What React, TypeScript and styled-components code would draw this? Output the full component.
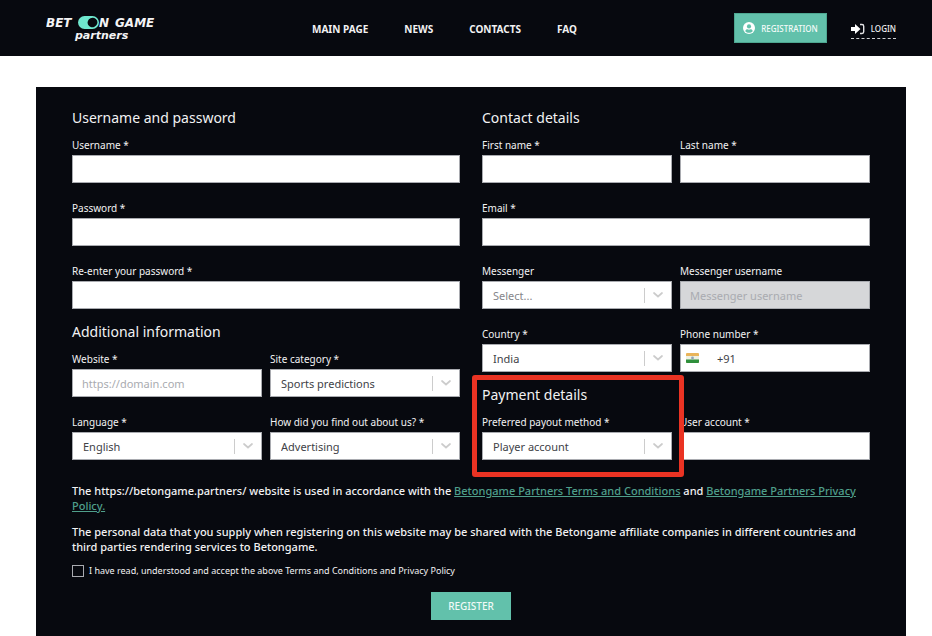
import React, { useId, useState } from 'react';
import styled, { createGlobalStyle } from 'styled-components';

const GlobalStyle = createGlobalStyle`
  *, *::before, *::after { box-sizing: border-box; }
  body {
    margin: 0;
    background: #fff;
    color: #f2f2f3;
    font-family: "Noto Sans", "Open Sans", sans-serif;
    font-size: 11px;
  }
  button, input, select { font: inherit; color: inherit; }
`;

const Header = styled.header`
  display: flex;
  align-items: center;
  height: 56px;
  padding: 0 36px 0 46px;
  background: #07090f;
`;

const LogoLink = styled.a`
  display: flex;
  flex: none;
`;

const Nav = styled.nav`
  display: flex;
  gap: 36px;
  margin-left: 154px;
  padding-top: 2px;
`;

const NavLink = styled.a`
  color: #f2f2f3;
  font-size: 10px;
  font-weight: 700;
  line-height: 16px;
  text-decoration: none;
  white-space: nowrap;
`;

const Actions = styled.div`
  display: flex;
  align-items: center;
  gap: 24px;
  margin-left: auto;
`;

const RegistrationButton = styled.button`
  display: flex;
  align-items: center;
  gap: 6px;
  height: 30px;
  padding: 0 8px;
  border: 1px solid #4ea791;
  background: #62c1ab;
  color: #f4fbf9;
  font-size: 8px;
  font-weight: 500;
  white-space: nowrap;
`;

const LoginLink = styled.a`
  display: flex;
  align-items: center;
  gap: 6px;
  height: 20px;
  margin-top: 2px;
  border-bottom: 1px dashed #d0d1d3;
  color: #f2f2f3;
  font-size: 8px;
  font-weight: 500;
  text-decoration: none;
`;

const Panel = styled.main`
  margin: 31px 26px 0 36px;
  padding: 21px 36px 16px;
  background: #07090f;
`;

const Columns = styled.div`
  display: grid;
  grid-template-columns: 1fr 1fr;
  gap: 22px;
`;

const Column = styled.div`
  display: flex;
  flex-direction: column;
  gap: 13px;
`;

const Section = styled.section`
  position: relative;
`;

const Heading = styled.h2`
  margin: 0 0 9px;
  font-size: 14px;
  font-weight: 400;
  line-height: 20px;
`;

const Fields = styled.div`
  display: grid;
  grid-template-columns: 1fr 1fr;
  gap: 17px 8px;
`;

const Field = styled.div<{ $wide?: boolean }>`
  display: flex;
  flex-direction: column;
  gap: 2px;
  min-width: 0;
  grid-column: ${(p) => (p.$wide ? 'span 2' : 'auto')};
`;

const Label = styled.label`
  font-size: 10px;
  font-weight: 400;
  line-height: 16px;
  white-space: nowrap;
`;

const TextInput = styled.input`
  width: 100%;
  height: 28px;
  padding: 0 9px;
  border: 1px solid #a9abb0;
  border-radius: 0;
  background: #fff;
  color: #414247;
  &::placeholder { color: #a9abb0; opacity: 1; }
  &:disabled { background: #d6d7d9; }
`;

const SelectBox = styled.div`
  display: grid;
  grid-template-columns: 1fr 27px;
  align-items: center;
  height: 28px;
  border: 1px solid #a9abb0;
  background: #fff;
`;

const Select = styled.select<{ $empty: boolean }>`
  grid-area: 1 / 1 / 2 / 3;
  width: 100%;
  height: 26px;
  padding: 0 32px 0 10px;
  border: 0;
  appearance: none;
  background: transparent;
  color: ${(p) => (p.$empty ? '#85868a' : '#414247')};
`;

const Indicator = styled.span`
  grid-area: 1 / 2;
  display: flex;
  align-items: center;
  justify-content: center;
  height: 15px;
  border-left: 1px solid #cccccc;
  pointer-events: none;
`;

const PhoneBox = styled.div`
  display: flex;
  align-items: center;
  height: 28px;
  border: 1px solid #a9abb0;
  background: #fff;
`;

const FlagButton = styled.button`
  display: flex;
  padding: 0 0 0 5px;
  border: 0;
  background: none;
`;

const PhoneInput = styled.input`
  flex: 1;
  min-width: 0;
  height: 26px;
  padding: 0 0 0 18px;
  border: 0;
  background: transparent;
  color: #414247;
`;

const Highlight = styled.div`
  position: absolute;
  top: -10px;
  right: calc(50% - 8px);
  bottom: -17px;
  left: -10px;
  border: 5px solid #ea3323;
  border-radius: 3px;
  pointer-events: none;
`;

const Terms = styled.div`
  display: flex;
  flex-direction: column;
  gap: 11px;
  margin-top: 23px;
`;

const Paragraph = styled.p`
  margin: 0;
  font-weight: 500;
  line-height: 15px;
`;

const TermsLink = styled.a`
  color: #4f9f8b;
`;

const Agreement = styled.div`
  display: flex;
  align-items: center;
  gap: 5px;
  margin-top: 9px;
`;

const Checkbox = styled.input`
  width: 12px;
  height: 12px;
  margin: 0;
  border: 1px solid #a9abb0;
  appearance: none;
  &:checked { background: #62c1ab; }
`;

const AgreementLabel = styled.label`
  font-size: 9px;
  font-weight: 400;
  line-height: 16px;
`;

const RegisterButton = styled.button`
  display: block;
  height: 28px;
  margin: 13px auto 0;
  padding: 0 17px;
  border: 0;
  background: #62c1ab;
  color: #f0faf7;
  font-size: 10px;
  font-weight: 500;
`;

function Logo() {
  return (
    <svg width="112" height="32" viewBox="0 0 112 32" role="img" aria-label="Bet On Game partners">
      <g fill="#f4f4f5" fontFamily="'DejaVu Sans', sans-serif" fontWeight="700" fontStyle="italic">
        <text x="0" y="15" fontSize="12">BET</text>
        <text x="53" y="15" fontSize="12">N</text>
        <text x="69" y="15" fontSize="12">GAME</text>
        <text x="29" y="27" fontSize="11">partners</text>
      </g>
      <rect x="32" y="4" width="21" height="13" rx="6.5" fill="#6fe8cf" />
      <ellipse cx="46.5" cy="10.5" rx="5" ry="4.7" transform="rotate(-25 46.5 10.5)" fill="#07090f" />
    </svg>
  );
}

function UserIcon() {
  return (
    <svg width="12" height="12" viewBox="0 0 12 12" aria-hidden="true">
      <circle cx="6" cy="6" r="6" fill="#fff" />
      <circle cx="6" cy="4.4" r="2.1" fill="#62c1ab" />
      <path d="M2.3 9.2C2.5 7.8 3.4 7.2 4.4 7.2c1 .6 2.2.6 3.2 0 1 0 1.9.6 2.1 2C8.7 10.3 7.4 10.8 6 10.8S3.3 10.3 2.3 9.2Z" fill="#62c1ab" />
    </svg>
  );
}

function LoginIcon() {
  return (
    <svg width="14" height="12" viewBox="0 0 14 12" aria-hidden="true">
      <path d="M0 4h4V1l5.500 5L4 11V8H0Z" fill="#fff" />
      <path d="M9 1.500h2c1.100 0 1.700.7 1.700 1.700v5.600c0 1-.6 1.700-1.700 1.700H9" fill="none" stroke="#e4e4e6" strokeWidth="1.400" />
    </svg>
  );
}

function Chevron() {
  return (
    <svg width="10" height="6" viewBox="0 0 10 6" aria-hidden="true">
      <path d="M1 1l4 3.500L9 1" fill="none" stroke="#cccccc" strokeWidth="1.700" strokeLinecap="round" />
    </svg>
  );
}

function IndiaFlag() {
  return (
    <svg width="13" height="10" viewBox="0 0 13 10" role="img" aria-label="India">
      <rect width="13" height="10" rx="1" fill="#e9b45a" />
      <rect y="3" width="13" height="4" fill="#eef0e2" />
      <path d="M0 6.600h13V9a1 1 0 0 1-1 1H1a1 1 0 0 1-1-1Z" fill="#2f8f3c" />
      <circle cx="6.500" cy="5" r="1.400" fill="#8fa3b5" />
    </svg>
  );
}

interface InputProps {
  label: string;
  type?: string;
  placeholder?: string;
  wide?: boolean;
  disabled?: boolean;
}

function InputField({ label, type = 'text', placeholder, wide, disabled }: InputProps) {
  const id = useId();
  return (
    <Field $wide={wide}>
      <Label htmlFor={id}>{label}</Label>
      <TextInput id={id} type={type} placeholder={placeholder} disabled={disabled} />
    </Field>
  );
}

function SelectField({ label, options }: { label: string; options: string[] }) {
  const id = useId();
  const [value, setValue] = useState(options[0]);
  return (
    <Field>
      <Label htmlFor={id}>{label}</Label>
      <SelectBox>
        <Select id={id} value={value} $empty={value === 'Select...'} onChange={(e) => setValue(e.target.value)}>
          {options.map((o) => <option key={o}>{o}</option>)}
        </Select>
        <Indicator><Chevron /></Indicator>
      </SelectBox>
    </Field>
  );
}

function PhoneField() {
  const id = useId();
  return (
    <Field>
      <Label htmlFor={id}>Phone number *</Label>
      <PhoneBox>
        <FlagButton type="button"><IndiaFlag /></FlagButton>
        <PhoneInput id={id} type="tel" defaultValue="+91" />
      </PhoneBox>
    </Field>
  );
}

export default function App() {
  return (
    <>
      <GlobalStyle />
      <Header>
        <LogoLink href="#"><Logo /></LogoLink>
        <Nav>
          <NavLink href="#main">MAIN PAGE</NavLink>
          <NavLink href="#news">NEWS</NavLink>
          <NavLink href="#contacts">CONTACTS</NavLink>
          <NavLink href="#faq">FAQ</NavLink>
        </Nav>
        <Actions>
          <RegistrationButton type="button"><UserIcon />REGISTRATION</RegistrationButton>
          <LoginLink href="#login"><LoginIcon />LOGIN</LoginLink>
        </Actions>
      </Header>
      <Panel>
        <form onSubmit={(e) => e.preventDefault()}>
          <Columns>
            <Column>
              <Section>
                <Heading>Username and password</Heading>
                <Fields>
                  <InputField label="Username *" wide />
                  <InputField label="Password *" type="password" wide />
                  <InputField label="Re-enter your password *" type="password" wide />
                </Fields>
              </Section>
              <Section>
                <Heading>Additional information</Heading>
                <Fields>
                  <InputField label="Website *" type="url" placeholder="https://domain.com" />
                  <SelectField label="Site category *" options={['Sports predictions']} />
                  <SelectField label="Language *" options={['English']} />
                  <SelectField label="How did you find out about us? *" options={['Advertising']} />
                </Fields>
              </Section>
            </Column>
            <Column>
              <Section>
                <Heading>Contact details</Heading>
                <Fields>
                  <InputField label="First name *" />
                  <InputField label="Last name *" />
                  <InputField label="Email *" type="email" wide />
                  <SelectField label="Messenger" options={['Select...']} />
                  <InputField label="Messenger username" placeholder="Messenger username" disabled />
                  <SelectField label="Country *" options={['India']} />
                  <PhoneField />
                </Fields>
              </Section>
              <Section>
                <Heading>Payment details</Heading>
                <Fields>
                  <SelectField label="Preferred payout method *" options={['Player account']} />
                  <InputField label="User account *" />
                </Fields>
                <Highlight />
              </Section>
            </Column>
          </Columns>
          <Terms>
            <Paragraph>
              The https://betongame.partners/ website is used in accordance with the{' '}
              <TermsLink href="#terms">Betongame Partners Terms and Conditions</TermsLink> and{' '}
              <TermsLink href="#privacy">Betongame Partners Privacy Policy.</TermsLink>
            </Paragraph>
            <Paragraph>
              The personal data that you supply when registering on this website may be shared with the Betongame
              affiliate companies in different countries and third parties rendering services to Betongame.
            </Paragraph>
          </Terms>
          <Agreement>
            <Checkbox type="checkbox" id="agree" />
            <AgreementLabel htmlFor="agree">
              I have read, understood and accept the above Terms and Conditions and Privacy Policy
            </AgreementLabel>
          </Agreement>
          <RegisterButton type="submit">REGISTER</RegisterButton>
        </form>
      </Panel>
    </>
  );
}
